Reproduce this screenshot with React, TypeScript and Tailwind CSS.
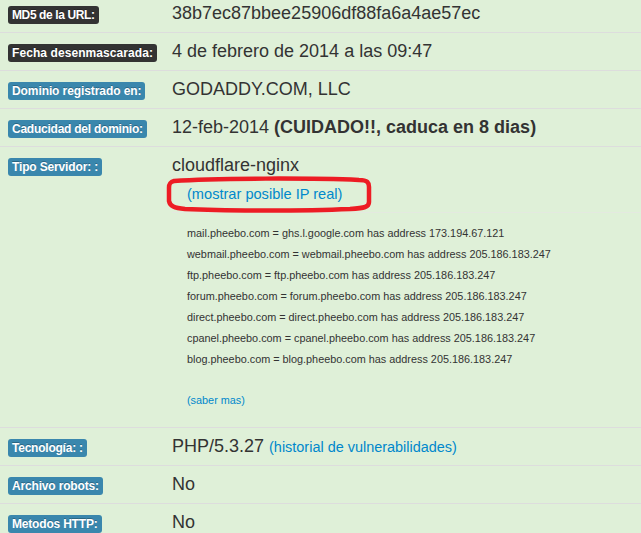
const sans = "font-['Liberation_Sans',Arial,sans-serif]";

function Label({ text, dark, fit }: { text: string; dark?: boolean; fit: string }) {
  return (
    <span
      className={`inline-block h-[18px] px-1 rounded-[3px] text-white text-xs leading-[18px] font-bold whitespace-nowrap [text-shadow:0_-1px_0_rgba(0,0,0,0.25)] ${fit} ${
        dark ? "bg-[#333333]" : "bg-[#3a87ad]"
      }`}
    >
      {text}
    </span>
  );
}

function Row({ label, dark, fit, children, last }: { label: string; dark?: boolean; fit: string; children: React.ReactNode; last?: boolean }) {
  return (
    <div className={`flex h-[38px] ${last ? "" : "border-b border-[#dddddd]"}`}>
      <div className="w-[172px] pl-2 pt-[11px] shrink-0 flex items-start">
        <Label text={label} dark={dark} fit={fit} />
      </div>
      <div className="pt-[8px] text-[18px] leading-[20px] text-[#333333] whitespace-nowrap">{children}</div>
    </div>
  );
}

const hosts = [
  "mail.pheebo.com = ghs.l.google.com has address 173.194.67.121",
  "webmail.pheebo.com = webmail.pheebo.com has address 205.186.183.247",
  "ftp.pheebo.com = ftp.pheebo.com has address 205.186.183.247",
  "forum.pheebo.com = forum.pheebo.com has address 205.186.183.247",
  "direct.pheebo.com = direct.pheebo.com has address 205.186.183.247",
  "cpanel.pheebo.com = cpanel.pheebo.com has address 205.186.183.247",
  "blog.pheebo.com = blog.pheebo.com has address 205.186.183.247",
];

export default function App() {
  return (
    <div className={`relative w-[641px] h-[533px] overflow-hidden bg-[#dff0d8] ${sans}`}>
      <div className="-mt-[5px]">
        <Row label="MD5 de la URL:" dark fit="tracking-[-0.39px]">38b7ec87bbee25906df88fa6a4ae57ec</Row>
        <Row label="Fecha desenmascarada:" dark fit="tracking-[0.08px]">4 de febrero de 2014 a las 09:47</Row>
        <Row label="Dominio registrado en:" fit="tracking-[-0.09px]">GODADDY.COM, LLC</Row>
        <Row label="Caducidad del dominio:" fit="tracking-[-0.24px]">
          12-feb-2014 <b>(CUIDADO!!, caduca en 8 dias)</b>
        </Row>
        <div className="flex h-[281px] border-b border-[#dddddd]">
          <div className="w-[172px] pl-2 pt-[11px] shrink-0 flex items-start">
            <Label text="Tipo Servidor: :" fit="tracking-[-0.15px]" />
          </div>
          <div className="flex-1 pt-[8px]">
            <div className="text-[18px] leading-[20px] text-[#333333]">cloudflare-nginx</div>
            <div className="mt-[5px] h-[33px] border-b border-[#e4e9e0] pl-[15px] pt-[2px]">
              <a className="text-[14.6px] leading-[20px] text-[#0088cc]">(mostrar posible IP real)</a>
            </div>
            <div className="pl-[15px] pt-[10px] text-[10.85px] text-[#333333]">
              {hosts.map((h) => (
                <div key={h} className="h-[21px] leading-[21px] whitespace-nowrap">{h}</div>
              ))}
              <a className="block mt-[20px] leading-[20px] text-[#0088cc]">(saber mas)</a>
            </div>
          </div>
        </div>
        <Row label="Tecnología: :" fit="tracking-[-0.23px]">
          PHP/5.3.27 <a className="text-[14.45px] text-[#0088cc]">(historial de vulnerabilidades)</a>
        </Row>
        <Row label="Archivo robots:" fit="tracking-[-0.17px]">No</Row>
        <Row label="Metodos HTTP:" fit="tracking-[-0.19px]" last>No</Row>
      </div>
      <svg className="absolute left-[165px] top-[175px]" width="210" height="40" viewBox="0 0 210 40" fill="none">
        <path
          d="M9 6 C50 3 150 3 194 5 C203 5 204 8 204 12 L204 27 C204 32 200 33 185 34 C140 36 60 36 20 34 C9 33 5 31 4 26 L4 13 C4 9 5 7 9 6 Z"
          stroke="#ed1c24"
          strokeWidth="4.5"
        />
      </svg>
    </div>
  );
}
